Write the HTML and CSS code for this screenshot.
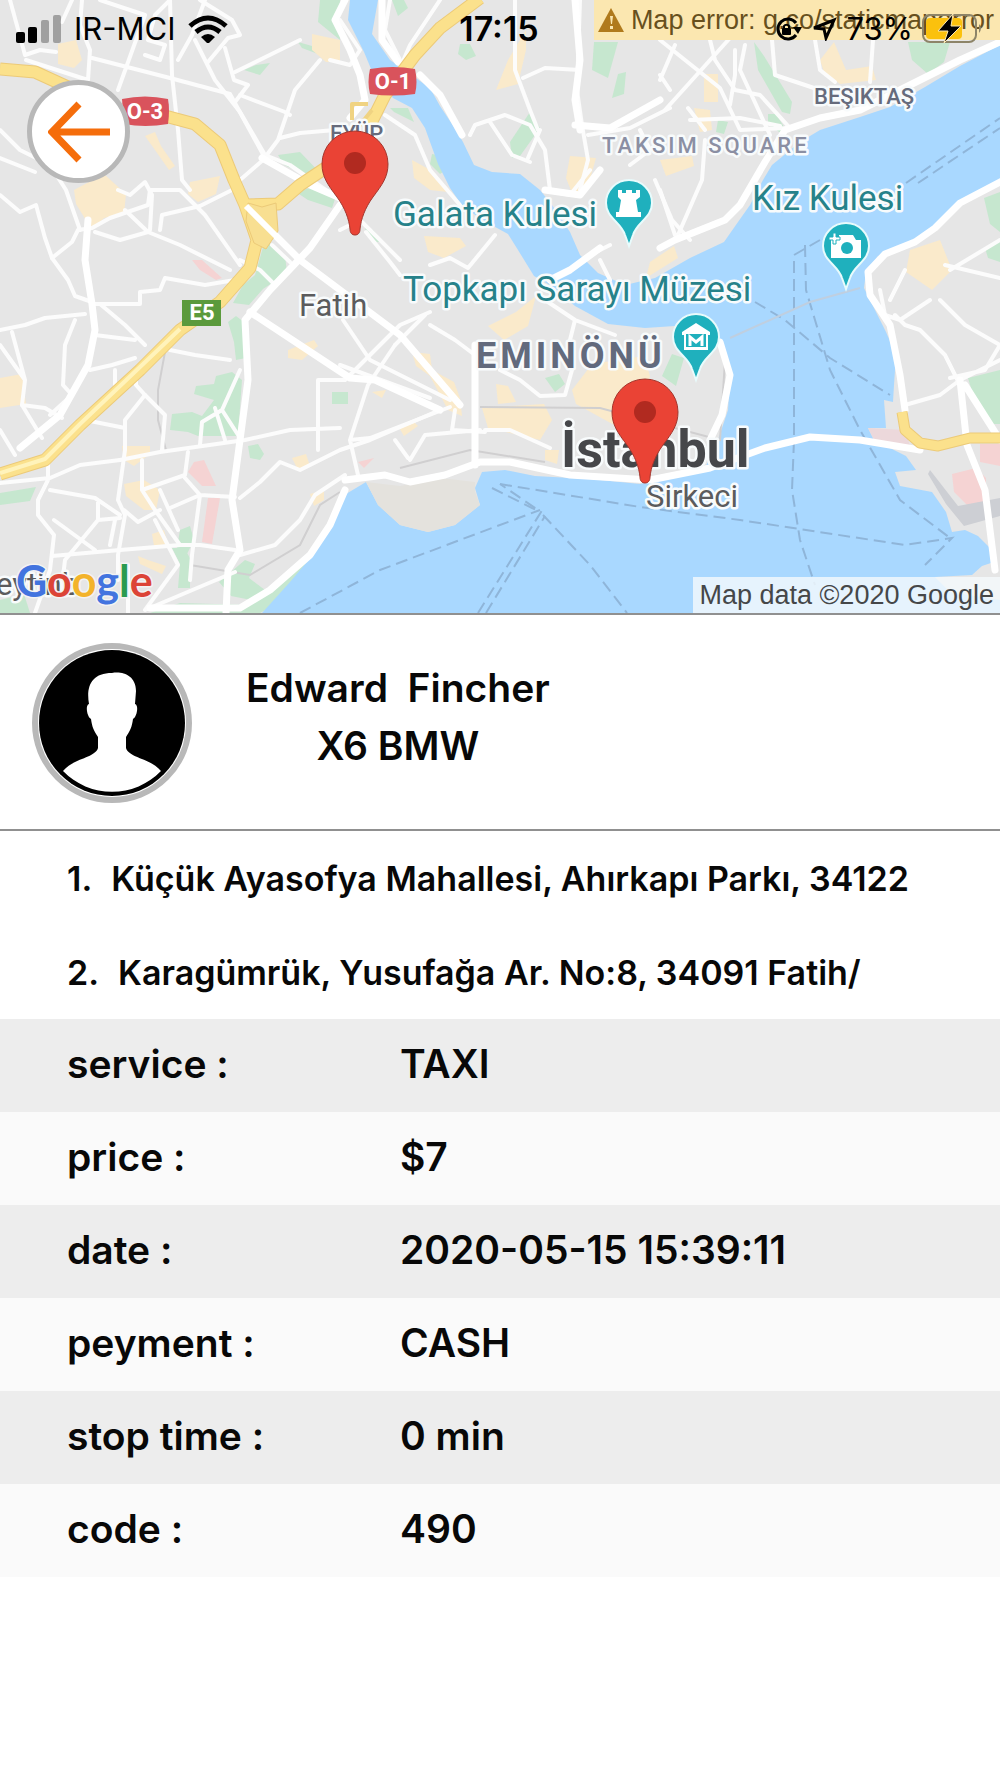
FILE: index.html
```html
<!DOCTYPE html>
<html lang="en">
<head>
<meta charset="utf-8">
<meta name="viewport" content="width=device-width, initial-scale=1">
<title>Trip details</title>
<link rel="stylesheet" href="styles.css">
</head>
<body>
<main class="trip">
  <section class="map" aria-label="Trip map">
    <svg class="map-canvas" viewBox="0 0 1000 613" role="img" aria-label="Map of Istanbul">
      <defs>
        <path id="pin" d="M0 0C-3 0-5-2-5-6C-6-16-10-27-18-38C-27-50-33-58-33-71A33 33 0 0 1 33-71C33-58 27-50 18-38C10-27 6-16 5-6C5-2 3 0 0 0Z"/>
        <path id="poi" d="M0 0L-4-11C-8-24-23-28-23-43A23 23 0 0 1 23-43C23-28 8-24 4-11Z"/>
      </defs>
      <rect width="1000" height="613" fill="#e6e6e6"/>

      <!-- parks -->
      <g fill="#c6e7cf">
        <path d="M320 0H340V40L318 22Z"/><path d="M298 42l14 4 6 8-16-6Z"/><path d="M244 70l12-5 14-2-10 12Z"/>
        <path d="M278 155l22-3 24 25-20-3-20-9Z"/><path d="M296 192l20-6 20 10-4 12-24-8Z"/>
        <path d="M265 240l20 15 2 18-24 16-14 16-16-2 10-18 12-10Z"/>
        <path d="M228 322l8-6 8 6 2 36-10 2-2-18Z"/>
        <path d="M216 376l16-4 10 8-4 56-40 0-10-4-18-2 2-16 20-2 10 4 12-16-20-6 2-8 18-2Z"/>
        <path d="M248 446l10-2 6 10-4 6-10-2Z"/><path d="M0 493l36-6-6 14-30 4Z"/>
        <path d="M180 530l10-4 4 14-10 20-8-6Z"/><path d="M172 548l12 0 6 10 0 30-12 0 2-24Z"/>
        <path d="M0 600l24-6 6 19H0Z"/><path d="M245 560l10 4-6 14 16 12-14 10-20-4-12-14Z"/>
        <path d="M150 613l30-10 70 2 30-20 40-35-5 20-30 30-25 13Z"/>
        <path d="M392 0h12l4 8-10 8Z"/><path d="M460 44h10l6 12-10 4-8-6Z"/><path d="M594 42h24l-10 36-16-8Z"/>
        <path d="M618 74l8-2-2 22-12 4Z"/><path d="M530 112l10 16-20 28-8 2-2-16Z"/><path d="M390 108l18 0 6 14-20-10Z"/>
        <path d="M432 154l10 2 4 14-6 4-10-10Z"/><path d="M365 228l8 2 10 12-6 0-10-6Z"/>
        <path d="M754 42l10 14 28 46-2 12-8-2-24-42Z"/><path d="M768 114l8 0 10 16-4 4-14-10Z"/>
        <path d="M718 120l10 2-4 12-8-2Z"/><path d="M908 42h42l-6 20-16 12-16-14Z"/>
        <path d="M984 198l16-6v40l-10-8Z"/><path d="M985 248l15-8v22l-12-4Z"/><path d="M968 378l32-8v54l-10 0-16-26Z"/>
        <path d="M332 392h16v12h-16Z"/><path d="M545 378l14-4 6 10-10 8Z"/><path d="M662 376l10-22 12 4-8 28Z"/>
      </g>
      <!-- commercial areas -->
      <g fill="#faeacb">
        <path d="M58 44l18-4 6 20-8 8-16-4Z"/><path d="M74 190l30-16 22 20-2 20-20 4-12 12-16-26Z"/>
        <path d="M190 182l30-6-4 18-18 8-10-8Z"/><path d="M145 136l10-4 6 14 14 20-6 4-14-20Z"/>
        <path d="M312 34l28 6v22l-14 0-14-12Z"/><path d="M0 378l22-4 4 30-26 4Z"/>
        <path d="M122 446l28 0 0 8-16 12-10-6Z"/><path d="M124 484l20-4 16 10-4 20-12 0-18-14Z"/>
        <path d="M152 534l12-4 4 14-14 2Z"/><path d="M138 556l10 4 18 6-4 8-22-10Z"/>
        <path d="M288 350l26-10 4 6-16 14-14-2Z"/><path d="M292 458l14-4 4 12-12 4Z"/><path d="M310 494l14-4 0 10-10 6Z"/>
        <path d="M508 60l18-30 0 20-8 34-22 6Z"/><path d="M412 160l22 12 14 20-18-2-16-12Z"/>
        <path d="M424 236l36 2 6 8-22 12-16-6Z"/><path d="M570 156l26 2-8 28-14 12-8-20Z"/>
        <path d="M412 352l18 2 2 16 22 12 6 16 2 18-14-6-18-34-14-10Z"/>
        <path d="M482 408l62-4 8 16-12 20-52-12Z"/><path d="M496 384l12 2 8 16-18 2Z"/>
        <path d="M488 326l28-14 20-16-8 30-24 14Z"/><path d="M572 390l20-26 52-8 6 20-10 40-24 10-40-22Z"/>
        <path d="M650 262l24-16 4 12-32 20Z"/><path d="M694 108l16 2 2 20-12 2Z"/><path d="M704 74l14 0 0 28-14 0Z"/>
        <path d="M820 60l14-18 12 28 26-4 4 14-36 4-16-12Z"/><path d="M910 250l30-10 12 30-20 20-26-18Z"/>
        <path d="M660 160l32-4 2 10-28 10Z"/><path d="M545 450l14 0-2 14-12-4Z"/>
        <path d="M398 426l14-6 6 6-14 10Z"/><path d="M372 392l14-2-4 8Z"/>
      </g>
      <g fill="#f5d3d3">
        <path d="M192 260l10 0 20 18-6 2-16-10Z"/><path d="M194 462l10-2 12 26-14 0-14-14Z"/><path d="M208 498h12l-8 46-10-2Z"/>
        <path d="M952 474l24-6 10 10 0 24-16 6-16-16Z"/><path d="M980 444h20v22l-20-4Z"/><path d="M358 462l16-4-10 10Z"/>
      </g>

      <!-- water -->
      <g fill="#a9d8ff">
        <path d="M350 0H378L372 34L390 60L430 88L440 106L456 130L463 142L474 165L492 172L520 174L540 190L552 205L570 232L580 255L598 273L625 285L655 278L690 258L724 242L738 222L750 205L763 180L772 165L800 142L820 130L860 117L890 107L925 87L960 66L1000 45V180L960 201L935 225L920 240L892 252L878 256L866 272L864 288L874 308L886 332L896 355L894 385L893 402L884 400L886 428L868 428L874 440L906 456L916 470L895 472L900 486L932 492L946 512L952 532L965 530L978 536L992 550L994 562L982 566L972 575L935 577L950 592L1000 600V613H262L290 582L312 556L326 535L335 510L346 494L366 482L378 505L400 525L428 532L455 525L480 505L475 488L482 472L505 470L535 476L590 479L640 484L705 468L718 440L728 410L730 375L722 340L690 325L645 328L608 324L575 306L548 284L534 276L518 250L508 234L486 222L463 207L450 188L438 164L425 128L412 108L393 98L374 76L364 52L348 20Z"/>
      </g>
      <path d="M366 482L400 486L440 478L475 482L475 492L480 505L455 525L428 532L400 525L378 505Z" fill="#e4e2dd"/>
      <path d="M868 428L905 430L912 452L874 440Z" fill="#ecd8db"/>
      <path d="M930 470l28 36 42-8v18l-36 10-18-22-18-30Z" fill="#cdcfd4"/>

      <!-- ferry lines -->
      <g fill="none" stroke="#8fb5d9" stroke-width="2" stroke-dasharray="12 6">
        <path d="M300 613L380 570L460 540L540 510"/><path d="M478 613L541 512L500 484"/><path d="M486 613L545 516"/>
        <path d="M543 515L590 565L627 613"/><path d="M492 488L540 512"/><path d="M500 484L640 507L740 520L905 545L952 538L925 565"/>
        <path d="M906 183L1000 118"/><path d="M918 183L1000 128"/><path d="M820 240L794 255V440L792 490L800 540L815 585"/>
        <path d="M805 245L806 290L815 320L830 370L860 430L900 500L950 538"/><path d="M755 302L785 320L830 358L890 395"/>
      </g>
      <path d="M730 338L810 302L860 288" fill="none" stroke="#bfcfe0" stroke-width="2"/>
      <g fill="none" stroke="#d0cfd0" stroke-width="2">
        <path d="M165 352L158 390V420L166 450M340 492L320 505L300 545L250 575L190 565M400 468L470 450L545 462M480 407L600 408L720 440L725 360"/>
      </g>

      <!-- minor roads -->
      <g fill="none" stroke="#fcfcfc" stroke-width="4" stroke-linejoin="round" stroke-linecap="round">
        <path d="M10 0L25 55L40 50L56 52M26 60L88 80L90 50L80 25L82 0"/>
        <path d="M62 22L72 0M92 58L170 78L230 94L265 158M118 90L145 15L100 0M145 55L160 60L165 45L148 40L155 15L170 0"/>
        <path d="M170 0L172 75L178 130L182 180L190 190M178 60L192 35L205 0"/>
        <path d="M195 40L215 80L240 112L265 155L290 165L340 200M208 62L228 38L240 35L232 20L200 0"/>
        <path d="M225 48L234 80L248 85L235 102M235 72L300 40M240 95L285 112L290 115"/>
        <path d="M320 60L295 90L278 140L263 160L240 180M280 138L300 133L335 130"/>
        <path d="M0 158L35 172M0 130L20 150L50 165L66 190L80 230"/>
        <path d="M0 195L20 212L36 205L45 238L52 258L68 280L75 296L92 302"/>
        <path d="M52 258L72 242L78 230L92 228L110 218L148 205L150 190L180 190L205 215L240 265"/>
        <path d="M95 232L120 240L148 232L125 210M148 232L180 245L230 270M160 230L162 215L200 206L232 190"/>
        <path d="M118 190L130 195L145 182L152 195L150 230M95 304H140V292L160 290L165 278L205 285L235 280"/>
        <path d="M272 245L290 262M240 260L260 270L275 285"/>
        <path d="M0 330L25 325L45 318L85 314M12 332L25 380L0 345M25 380L22 405L45 408L62 418M75 320L65 345L63 385L72 395L50 415"/>
        <path d="M22 405L42 438M0 430L15 455M100 304L125 325L145 345M95 335L135 340M90 370L112 365L135 358M115 370V385M136 370V385L145 395L165 415L162 450"/>
        <path d="M145 395L125 420V450L118 500L125 515L118 555V580M85 420L125 428M170 350L195 355L230 360"/>
        <path d="M0 483L50 478L80 465L120 460M48 455V480L38 500V515L54 535L50 570L35 613M50 490L95 498L120 515M98 500V520L120 518M98 520L65 560L62 585"/>
        <path d="M54 520L95 550M52 556L120 550L180 545L200 545L235 550M120 460L160 452L245 440L290 430L340 428"/>
        <path d="M188 452L185 475L142 490V460M142 490L155 510L180 545M185 478L200 495L235 497M170 508L200 495L192 555L190 580"/>
        <path d="M155 520L178 565L145 610L235 572M124 510L138 522L160 510M110 545L115 520M128 565V613M160 490L178 530"/>
        <path d="M240 370L222 410L202 422L200 445M215 408L225 440M222 410L240 438"/>
        <path d="M240 498L260 482L280 462L300 470L340 450L370 440L440 410M318 380H345L400 325L430 312M318 380V450"/>
        <path d="M240 555L275 545L300 520L315 495L345 475"/>
        <path d="M340 20L360 50L350 65L330 60M400 60L385 30L390 0M365 95L355 60"/>
        <path d="M470 135L475 125L505 115L530 125L545 150L550 190M490 122L512 155L530 162M540 130L528 158M400 68L410 45L430 15L440 0"/>
        <path d="M515 0V70L530 110L538 130M523 78L545 68L580 70"/>
        <path d="M385 115L415 135L430 170L460 205M340 230L360 220L370 230L400 260M430 265L450 258L468 268L495 235M366 232L390 262L400 275"/>
        <path d="M580 0L577 90L582 125L588 160L580 190M588 135L630 128L670 108M640 130L650 150L630 165M660 80L675 45M660 75L670 90"/>
        <path d="M545 190L570 195L590 170M655 180L672 220L690 240M600 260L610 280M590 255L610 245"/>
        <path d="M660 40L720 88L740 130L790 128M700 0L715 60L735 90L760 95L790 128M665 110L730 38M735 50V75L730 105M745 45L740 70L770 135"/>
        <path d="M772 40L775 75L820 90M815 40L820 70L835 82M873 40L870 82"/>
        <path d="M705 140L702 180L678 235M660 190L675 235M690 120L740 118L780 126M688 108L705 130"/>
        <path d="M430 325L455 340L475 355M340 365L430 398M343 320L370 360L450 400M395 345L368 385L350 440L358 475M350 440L370 438L450 407M395 440L408 458M455 410L452 430L485 432M410 460L425 435L480 430"/>
        <path d="M485 430L510 430L550 448M500 370L520 380L540 396L565 395L572 370M545 300L575 320L615 335M570 340L575 320M395 345L425 315"/>
        <path d="M895 315L905 325L920 330L945 355L955 375L960 385M880 290L885 315L900 320L930 300M940 300L965 325L1000 345M905 270L890 300M950 270L1000 240M945 265L1000 278"/>
        <path d="M905 405L940 395L960 380L1000 360M1000 345L985 370L950 378"/>
      </g>
      <!-- main roads -->
      <g fill="none" stroke="#fff" stroke-width="7" stroke-linejoin="round" stroke-linecap="round">
        <path d="M88 220L85 260L92 304L95 330L88 365L60 415L20 448M245 205L300 260L400 335L460 405"/>
        <path d="M340 205L310 248L270 290L245 320L248 380L240 440L232 500L240 550L228 570L226 613"/>
        <path d="M262 158L310 185L345 200M250 312L350 378L375 380L440 410M475 345V465"/>
        <path d="M345 480L385 475L410 482L445 475L480 462L510 462L570 475L650 480L710 468L765 448L810 437L860 440L920 450"/>
        <path d="M345 490L330 525L310 555L270 590L240 608L150 608"/>
        <path d="M345 0L335 20L350 50L360 75L365 100L350 118M420 75L440 95L462 135M382 0V40L398 62"/>
        <path d="M575 125L610 128L660 100M575 0L580 60L575 100L580 130M545 190L580 195L600 170"/>
        <path d="M1000 182L960 203L935 228L915 242L885 254L868 272L870 295L890 325L900 375L905 410M960 380L967 445L985 490L995 570M965 385L1000 440"/>
        <path d="M1000 42L960 60L900 90L860 110L820 118L785 130L765 162L740 205L725 220L675 240L660 248M550 280L570 270L600 248M720 342L730 375L722 415L710 440"/>
      </g>
      <!-- motorways -->
      <g fill="none" stroke-linejoin="round">
        <g stroke="#ecca78" stroke-width="13">
          <path d="M0 69L35 72L70 88M165 116L195 124L220 145L234 180L245 205L257 240L250 268L220 302L180 330L140 370L80 425L45 460L0 474M245 205L278 204L300 185L330 165M480 -2L440 28L415 55L385 95L370 125"/>
        </g>
        <g stroke="#fbe18c" stroke-width="11">
          <path d="M0 69L35 72L70 88M165 116L195 124L220 145L234 180L245 205L257 240L250 268L220 302L180 330L140 370L80 425L45 460L0 474M245 205L278 204L300 185L330 165M480 -2L440 28L415 55L385 95L370 125"/>
        </g>
        <path d="M248 203l14 4 14-4 2 28-12 18-12-6-8-22Z" fill="#f8df91" stroke="#ecca78"/>
        <path d="M902 412L905 430L920 443L938 446L970 438L1000 438" stroke="#ecca78" stroke-width="11"/>
        <path d="M902 412L905 430L920 443L938 446L970 438L1000 438" stroke="#fbe18c" stroke-width="9"/>
        <path d="M0 473L45 459L80 424L180 329" stroke="#fff3bb" stroke-width="4"/>
        <path d="M352 120V104H368M372 110L356 130" stroke="#f0d382" stroke-width="4"/>
      </g>
      <path d="M246 206L290 250" stroke="#fff" stroke-width="6"/>

      <!-- road shields -->
      <path d="M122 99Q145 94 168 99Q170 110 168 124Q145 128 124 124Z" fill="#d9535c"/>
      <path d="M370 69Q393 65 415 69Q418 82 415 94Q393 97 370 94Q367 82 370 69Z" fill="#d9535c"/>
      <rect x="182" y="300" width="39" height="26" fill="#5b9a3c"/>
      <g class="shield-text">
        <text x="145" y="119">O-3</text><text x="393" y="89">O-1</text><text x="202" y="320">E5</text>
      </g>

      <!-- place names -->
      <g class="place">
        <text class="district-small" x="330" y="141">EYÜP</text>
        <text class="district-small" x="814" y="104">BEŞIKTAŞ</text>
        <text class="square" x="602" y="153">TAKSIM SQUARE</text>
        <text class="district" x="476" y="368">EMINÖNÜ</text>
        <text class="town" x="299" y="316">Fatih</text>
        <text class="city" x="561" y="467">İstanbul</text>
        <text class="town" x="646" y="507">Sirkeci</text>
        <text class="town" x="-4" y="595">eytinb</text>
        <text class="poi" x="393" y="226">Galata Kulesi</text>
        <text class="poi" x="403" y="301">Topkapı Sarayı Müzesi</text>
        <text class="poi" x="752" y="210">Kız Kulesi</text>
      </g>

      <!-- points of interest -->
      <g fill="#1fb0bd" stroke="#e8fbfc" stroke-width="2">
        <use href="#poi" x="629" y="246"/><use href="#poi" x="846" y="289"/><use href="#poi" x="696" y="380"/>
      </g>
      <path d="M618 190h4v3h4v-3h6v3h4v-3h4v7l-4 3 2 12h3v5H616v-5h3l2-12-3-3Z" fill="#fff"/>
      <g fill="#fff">
        <path d="M831 240h8v-5h14l3 5h5v18h-30Z"/><path d="M833 233h3v4h4v3h-4v4h-3v-4h-4v-3h4Z" stroke="#1fb0bd"/>
        <circle cx="847" cy="248" r="6" fill="#1fb0bd"/>
        <path d="M682 332l14-9 14 9v3h-2v15h-24v-15h-2Z"/>
      </g>
      <path d="M686 334v13h20v-13Z" fill="#1fb0bd"/>
      <path d="M690 346v-9l6 5 6-5v9" fill="none" stroke="#fff" stroke-width="3"/>

      <!-- trip start and end -->
      <g fill="#ea4335" stroke="#a3362d">
        <use href="#pin" x="355" y="235"/><use href="#pin" x="645" y="483"/>
      </g>
      <g fill="#b12a20"><circle cx="355" cy="163" r="11"/><circle cx="645" cy="412" r="11"/></g>

      <text class="google" x="16" y="597"><tspan fill="#4274df">G</tspan><tspan fill="#dc4437">o</tspan><tspan fill="#f3b32b">o</tspan><tspan fill="#4274df">g</tspan><tspan fill="#2a9b50">l</tspan><tspan fill="#dc4437">e</tspan></text>
    </svg>

    <p class="map-error">
      <svg class="warning" viewBox="0 0 26 24" aria-hidden="true"><path d="M13 0L26 24H0Z" fill="#b07a1c"/><path d="M12 8h3l-1 8h-1ZM12 18h3v3h-3Z" fill="#fbe7b0"/></svg>
      <span>Map error: g.co/staticmaperror</span>
    </p>
    <p class="map-credit">Map data ©2020 Google</p>

    <div class="status-bar">
      <div class="status-left">
        <svg class="signal" viewBox="0 0 46 28" aria-hidden="true"><rect y="17" width="9" height="11" rx="2"/><rect x="12" y="12" width="9" height="16" rx="2"/><rect x="25" y="5" width="8" height="23" rx="2" opacity=".3"/><rect x="37" width="8" height="28" rx="2" opacity=".3"/></svg>
        <span>IR-MCI</span>
        <svg class="wifi" viewBox="0 0 40 28" aria-hidden="true"><path d="M2 11Q20-5 38 11M8 17Q20 7 32 17" fill="none" stroke="#000" stroke-width="5"/><path d="M13 22Q20 16 27 22L20 29Z"/></svg>
      </div>
      <time class="clock">17:15</time>
      <div class="status-right">
        <svg class="lock" viewBox="0 0 28 24" aria-hidden="true"><path d="M22 18A10 10 0 1 1 22 6" fill="none" stroke="#000" stroke-width="3"/><path d="M19 10h9l-4 7Z"/><rect x="8" y="11" width="9" height="7" rx="1"/><path d="M10 11V9a3 3 0 0 1 5 0v2" fill="none" stroke="#000" stroke-width="2"/></svg>
        <svg class="location" viewBox="0 0 26 24" aria-hidden="true"><path d="M3 11L23 3L15 21L13 12Z" fill="none" stroke="#000" stroke-width="3"/></svg>
        <span>73%</span>
        <svg class="battery" viewBox="0 0 60 32" aria-hidden="true"><rect x="1" y="2" width="53" height="27" rx="7" fill="none" stroke="#8d8468" stroke-width="2"/><path d="M57 11q4 4 0 9Z" fill="#8d8468"/><rect x="4" y="5" width="36" height="21" rx="4" fill="#fbc10d"/><path d="M31 1L16 18H26L22 30L39 13H29Z" stroke="#fbe7b0"/></svg>
      </div>
    </div>

    <button class="back" type="button" aria-label="Back">
      <svg viewBox="0 0 62 62" aria-hidden="true"><path d="M31 3L4 31L31 59M4 31H62" fill="none" stroke="#f56d0b" stroke-width="7"/></svg>
    </button>
  </section>

  <section class="driver">
    <svg class="avatar" viewBox="0 0 148 148" role="img" aria-label="Driver photo">
      <circle cx="74" cy="74" r="73"/>
      <path d="M74 24C84 22 98 26 98 42L97 55C101 56 99 68 95 70C94 78 92 82 88 88V99C91 109 112 109 123 122A68 68 0 0 1 25 122C36 109 57 109 60 99V88C56 82 54 78 53 70C49 68 47 56 51 55C48 38 53 24 74 24Z" fill="#fff"/>
    </svg>
    <div class="driver-info">
      <h1 class="driver-name">Edward  Fincher</h1>
      <p>X6 BMW</p>
    </div>
  </section>

  <ol class="stops">
    <li><span>1.</span><span>Küçük Ayasofya Mahallesi, Ahırkapı Parkı, 34122</span></li>
    <li><span>2.</span><span>Karagümrük, Yusufağa Ar. No:8, 34091 Fatih/</span></li>
  </ol>

  <table class="details">
    <tbody>
      <tr><th scope="row">service :</th><td>TAXI</td></tr>
      <tr><th scope="row">price :</th><td>$7</td></tr>
      <tr><th scope="row">date :</th><td>2020-05-15 15:39:11</td></tr>
      <tr><th scope="row">peyment :</th><td>CASH</td></tr>
      <tr><th scope="row">stop time :</th><td>0 min</td></tr>
      <tr><th scope="row">code :</th><td>490</td></tr>
    </tbody>
  </table>
</main>
</body>
</html>
```

FILE: styles.css
```css
* { box-sizing: border-box; }

body {
  margin: 0;
  background: #fff;
  color: #080808;
  font-family: Inter, "Liberation Sans", sans-serif;
  font-weight: 600;
}

h1, p, ol { margin: 0; padding: 0; font-weight: inherit; }

.map {
  position: relative;
  border-bottom: 2px solid #909090;
}

.map-canvas { display: block; width: 100%; font-weight: 400; }

.map-canvas text { font-family: Roboto, sans-serif; }

.shield-text text {
  fill: #fff;
  font-size: 22px;
  font-weight: 700;
  text-anchor: middle;
}

.place text {
  paint-order: stroke;
  stroke: #f8fbfc;
  stroke-width: 5px;
  stroke-linejoin: round;
}

.place .district-small { fill: #666b7c; font-size: 22px; font-weight: 500; }
.place .square { fill: #8b8fa3; font-size: 22px; font-weight: 500; letter-spacing: 3px; }
.place .district { fill: #626a7d; font-size: 36px; font-weight: 700; letter-spacing: 4px; }
.place .town { fill: #5b5b5d; font-size: 31px; }
.place .city { fill: #46474a; font-size: 52px; font-weight: 700; }
.place .poi { fill: #26828a; font-size: 35px; }

.map-canvas .google {
  font-family: Lato, sans-serif;
  font-size: 43px;
  font-weight: 700;
  paint-order: stroke;
  stroke: #f3f3f3;
  stroke-width: 3px;
}

.map-error {
  position: absolute;
  top: 0;
  right: 0;
  display: flex;
  align-items: center;
  gap: 7px;
  height: 40px;
  padding: 0 6px 0 4px;
  background: #fbe7b0;
  color: #67501d;
  font: 27px "Liberation Sans", sans-serif;
}

.warning { width: 26px; height: 24px; }

.map-credit {
  position: absolute;
  right: 0;
  bottom: 0;
  padding: 0 6px;
  background: rgba(245, 250, 253, .8);
  color: #454749;
  font: 27px/36px "Liberation Sans", sans-serif;
}

.status-bar {
  position: absolute;
  top: 8px;
  left: 0;
  right: 0;
  display: grid;
  grid-template-columns: 1fr auto 1fr;
  align-items: center;
  height: 38px;
  padding: 0 18px 0 16px;
  color: #000;
  font-size: 31px;
  font-weight: 400;
}

.status-left { display: flex; align-items: center; gap: 12px; }
.status-right { display: flex; align-items: center; justify-content: flex-end; gap: 9px; }
.clock { font-size: 34px; font-weight: 600; }
.signal { width: 46px; height: 28px; }
.wifi { width: 40px; height: 28px; }
.lock { width: 28px; height: 24px; }
.location { width: 26px; height: 24px; }
.battery { width: 60px; height: 32px; }

.back {
  position: absolute;
  top: 80px;
  left: 27px;
  width: 103px;
  height: 103px;
  display: grid;
  place-items: center;
  padding: 0;
  border: 5px solid #b8b8b8;
  border-radius: 50%;
  background: #fff;
}

.back svg { width: 62px; height: 62px; }

.driver {
  display: flex;
  align-items: flex-start;
  gap: 54px;
  padding: 28px 32px 26px;
  border-bottom: 2px solid #909090;
}

.avatar {
  width: 160px;
  height: 160px;
  border: 6px solid #b8b8b8;
  border-radius: 50%;
}

.driver-info {
  padding-top: 16px;
  font-size: 39px;
  line-height: 58px;
  text-align: center;
}

.driver-name { font-size: 39px; white-space: pre; }

.stops {
  list-style: none;
  font-size: 34px;
}

.stops li {
  display: flex;
  align-items: center;
  gap: 19px;
  min-height: 94px;
  padding: 0 67px;
}

.details {
  width: 100%;
  border-collapse: collapse;
  font-size: 39px;
}

.details tr { height: 93px; background: #fafafa; }
.details tr:nth-child(odd) { background: #ededed; }
.details th, .details td { padding: 0 0 4px; font-weight: 600; text-align: left; }
.details th { width: 40%; padding-left: 67px; }
```
